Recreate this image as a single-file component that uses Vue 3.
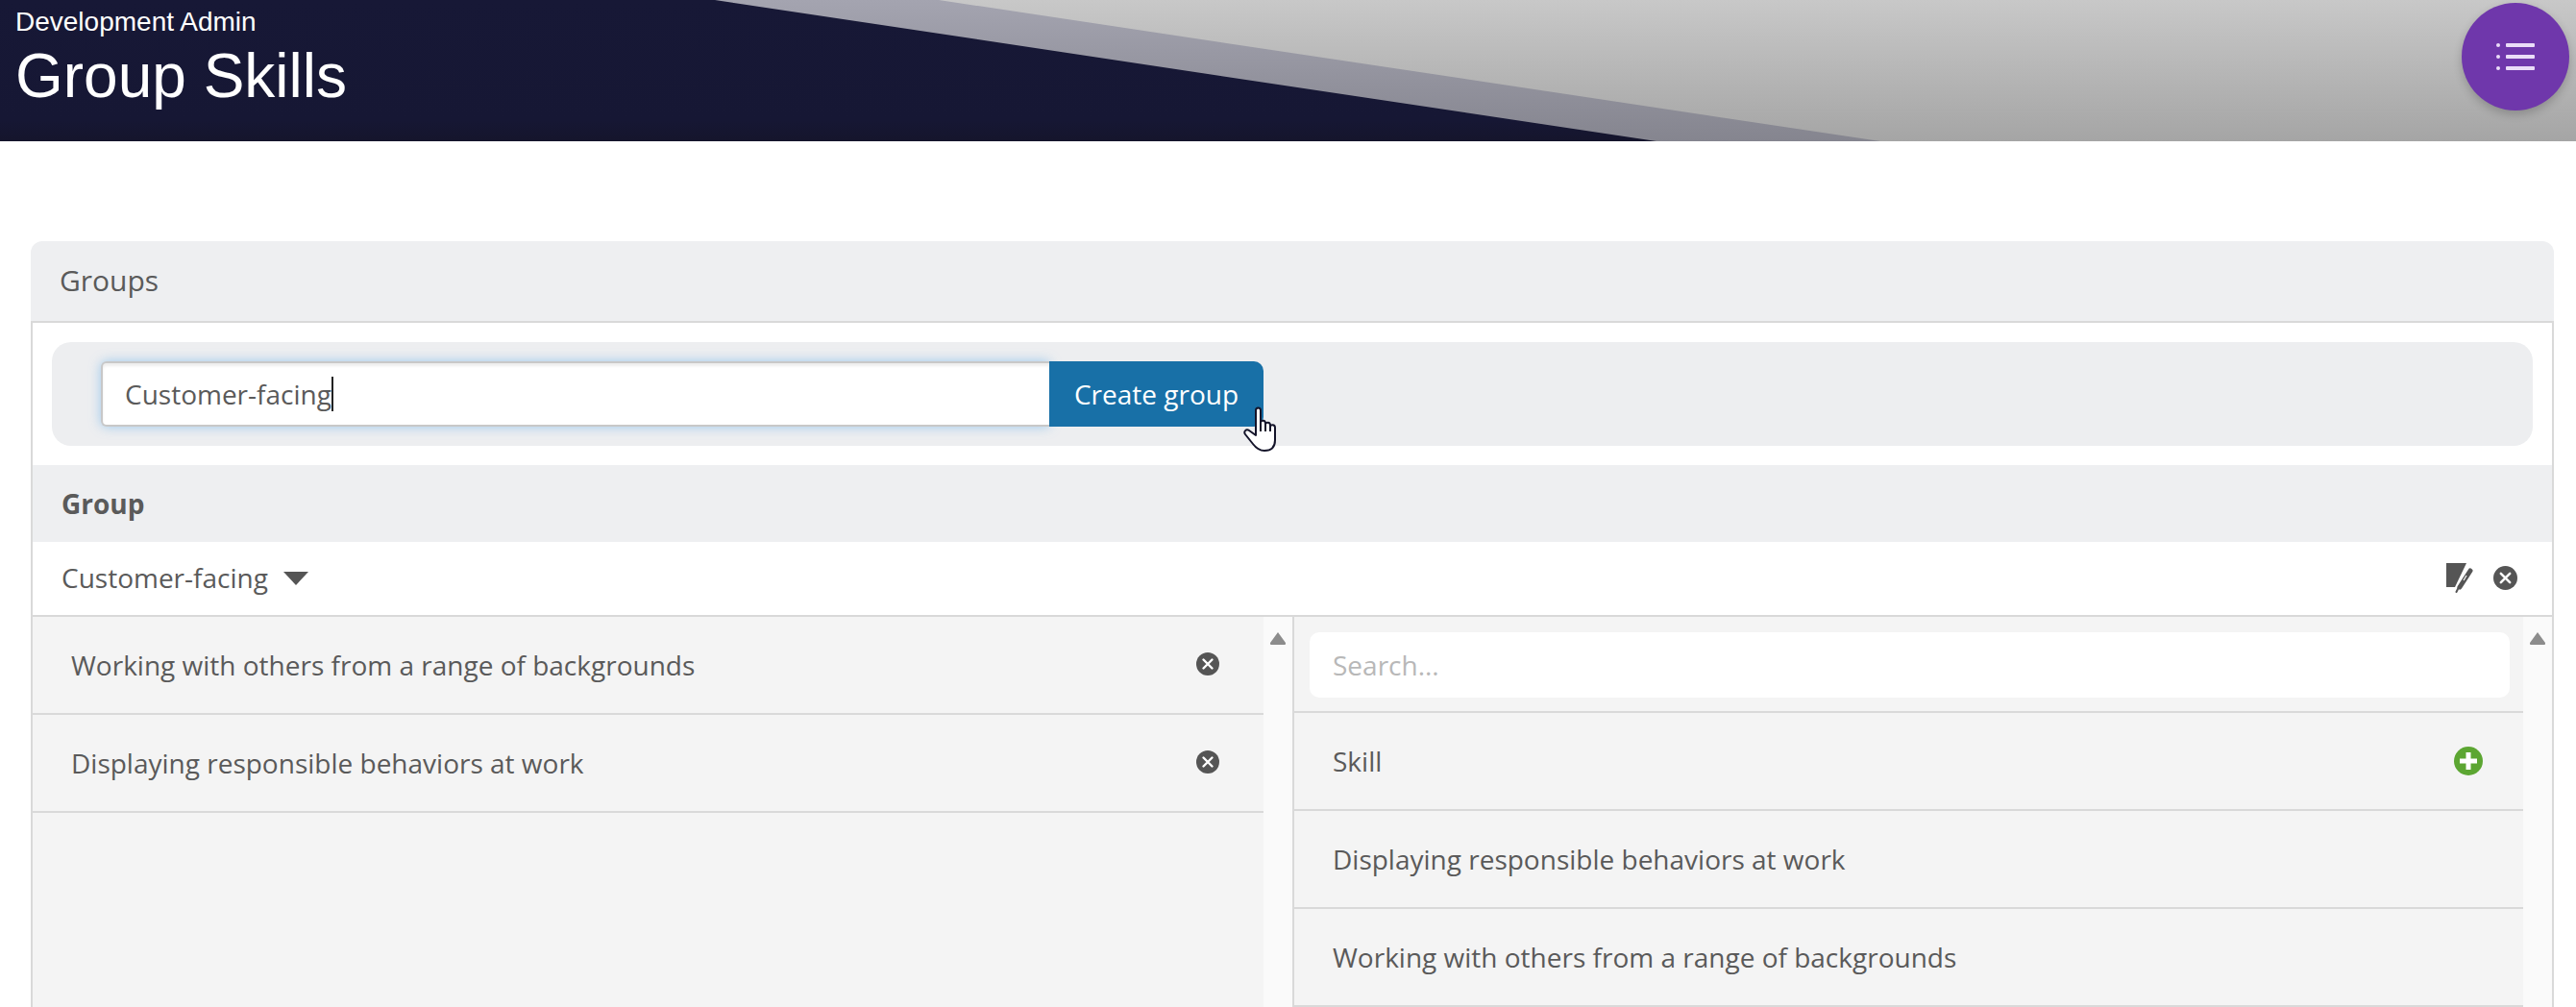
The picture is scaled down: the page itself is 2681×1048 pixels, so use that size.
<script setup>
const assigned = [
  'Working with others from a range of backgrounds',
  'Displaying responsible behaviors at work'
]
const available = [
  'Displaying responsible behaviors at work',
  'Working with others from a range of backgrounds'
]
</script>

<template>
  <div class="page">
    <header class="banner">
      <div class="wedge wedge-mid"></div>
      <div class="wedge wedge-light"></div>
      <div class="titles">
        <div class="crumb">Development Admin</div>
        <h1 class="title">Group Skills</h1>
      </div>
      <button class="fab" aria-label="Menu">
        <svg width="40" height="28" viewBox="0 0 40 28" fill="#eadcf8">
          <circle cx="2" cy="2" r="2" /><rect x="10" y="0" width="30" height="4" rx="1" />
          <circle cx="2" cy="14" r="2" /><rect x="10" y="12" width="30" height="4" rx="1" />
          <circle cx="2" cy="26" r="2" /><rect x="10" y="24" width="30" height="4" rx="1" />
        </svg>
      </button>
    </header>

    <main class="main">
      <section class="panel">
        <div class="panel-head">Groups</div>
        <div class="panel-body">
          <form class="create-band" @submit.prevent>
            <div class="fake-input"><span>Customer-facing</span><i class="caret"></i></div>
            <div class="create-wrap">
              <button class="create-btn">Create group</button>
              <svg class="hand" width="36" height="47" viewBox="0 0 36 47">
                <path d="M13 30 L13 4 C13 0.5 18 0.5 18 4 L18 17 C18 14 23 14 23 17.5 L23 19 C23 16 28 16 28 19.5 L28 21 C28 18.5 33 18.5 33 22 L33 35 C33 42 29 46 22 46 C16 46 13 43 10 39 L2 29 C0 26 3 23 6 25 Z" fill="#fff" stroke="#14142a" stroke-width="2" stroke-linejoin="round" />
                <path d="M18 17 V26 M23 19 V26 M28 21 V26" stroke="#14142a" stroke-width="2" fill="none" />
              </svg>
            </div>
          </form>

          <div class="group-head">Group</div>
          <div class="group-row">
            <div class="group-name">
              <span>Customer-facing</span>
              <svg width="26" height="14" viewBox="0 0 26 14"><path d="M0 0 H26 L13 14 Z" fill="#555" /></svg>
            </div>
            <div class="group-actions">
              <svg width="28" height="31" viewBox="0 0 28 31">
                <path d="M0 0 H21 L9 25 H0 Z" fill="#555" />
                <path d="M25 8 L14 25" stroke="#555" stroke-width="5" stroke-linecap="round" fill="none" />
                <path d="M13 25 L10.500 30" stroke="#555" stroke-width="2" stroke-linecap="round" fill="none" />
                <path d="M21 13 L18 18" stroke="#fff" stroke-width="1.200" fill="none" />
              </svg>
              <svg class="x-icon big" viewBox="0 0 24 24">
                <circle cx="12" cy="12" r="12" fill="#555" />
                <path d="M7.500 7.500 L16.500 16.500 M16.500 7.500 L7.500 16.500" stroke="#fff" stroke-width="2.400" stroke-linecap="round" />
              </svg>
            </div>
          </div>

          <div class="columns">
            <div class="col col-left">
              <div class="list">
                <div v-for="item in assigned" :key="item" class="item item-left">
                  <span>{{ item }}</span>
                  <svg class="x-icon" viewBox="0 0 24 24">
                    <circle cx="12" cy="12" r="12" fill="#555" />
                    <path d="M7.500 7.500 L16.500 16.500 M16.500 7.500 L7.500 16.500" stroke="#fff" stroke-width="2.400" stroke-linecap="round" />
                  </svg>
                </div>
              </div>
              <div class="scroll"><svg width="18" height="14" viewBox="0 0 18 14"><path d="M9 1 L17 12 Q17.500 14 16 14 H2 Q0.500 14 1 12 Z" fill="#8c8c8c" /></svg></div>
            </div>
            <div class="col col-right">
              <div class="list">
                <div class="search-row">
                  <input class="search" type="text" placeholder="Search..." />
                </div>
                <div class="item item-right">
                  <span>Skill</span>
                  <svg class="plus-icon" viewBox="0 0 30 30">
                    <circle cx="15" cy="15" r="15" fill="#5ca632" />
                    <path d="M15 6 V24 M6 15 H24" stroke="#fff" stroke-width="5" />
                  </svg>
                </div>
                <div v-for="item in available" :key="item" class="item item-right">
                  <span>{{ item }}</span>
                </div>
              </div>
              <div class="scroll"><svg width="18" height="14" viewBox="0 0 18 14"><path d="M9 1 L17 12 Q17.500 14 16 14 H2 Q0.500 14 1 12 Z" fill="#8c8c8c" /></svg></div>
            </div>
          </div>
        </div>
      </section>
    </main>
  </div>
</template>

<style>
html, body { margin: 0; height: 1048px; overflow: hidden; background: #fff; }
</style>

<style scoped>
* { box-sizing: border-box; }
.page {
  height: 1048px;
  overflow: hidden;
  font-family: "Open Sans", "Liberation Sans", sans-serif;
  color: #5a5a5a;
}
.banner {
  position: relative;
  height: 147px;
  background: linear-gradient(#171836, #161734 85%, #15152c);
  overflow: hidden;
}
.wedge { position: absolute; inset: 0; }
.wedge-mid {
  background: linear-gradient(#a4a4b0, #85858f);
  clip-path: polygon(744px 0, 100% 0, 100% 100%, 1724px 100%);
}
.wedge-light {
  background: linear-gradient(#c8c8c8, #a5a5a5);
  clip-path: polygon(977px 0, 100% 0, 100% 100%, 1957px 100%);
}
.titles {
  position: relative;
  padding: 6px 0 0 16px;
  font-family: "Liberation Sans", Arial, sans-serif;
  color: #fff;
}
.crumb { font-size: 28px; line-height: 34px; }
.title {
  margin: 3px 0 0 0;
  font-size: 64px;
  font-weight: 400;
  line-height: 72px;
}
.fab {
  position: absolute;
  left: 2562px;
  top: 3px;
  width: 112px;
  height: 112px;
  border: 0;
  border-radius: 50%;
  background: #6f37ab;
  box-shadow: 0 4px 10px rgba(0, 0, 0, .2);
  display: flex;
  align-items: center;
  justify-content: center;
  padding: 0;
}
.main { padding: 104px 23px 0 32px; }
.panel-head {
  height: 85px;
  padding: 0 0 2px 30px;
  display: flex;
  align-items: center;
  font-size: 30px;
  background: #eeeff1;
  border-bottom: 2px solid #d9d9d9;
  border-radius: 12px 12px 0 0;
}
.panel-body {
  border-left: 2px solid #d9d9d9;
  border-right: 2px solid #d9d9d9;
  padding-top: 20px;
}
.create-band {
  margin: 0 20px;
  height: 108px;
  padding: 20px 0 0 51px;
  background: #edeef0;
  border-radius: 20px;
  display: flex;
  align-items: flex-start;
}
.fake-input {
  width: 987px;
  height: 68px;
  padding-left: 23px;
  display: flex;
  align-items: center;
  font-size: 28px;
  background: #fff;
  border: 2px solid #c8c8c8;
  border-right: 0;
  border-radius: 6px 0 0 6px;
  box-shadow: 0 0 12px rgba(102, 175, 233, .6), inset 0 3px 3px rgba(0, 0, 0, .07);
}
.caret {
  width: 2px;
  height: 36px;
  background: #222;
}
.create-wrap { position: relative; }
.create-btn {
  display: block;
  width: 223px;
  height: 68px;
  padding: 0;
  border: 0;
  border-radius: 0 10px 10px 0;
  background: #1870a7;
  color: #fff;
  font-family: inherit;
  font-size: 28px;
}
.hand { position: absolute; left: 202px; top: 47px; }
.group-head {
  margin-top: 20px;
  height: 80px;
  padding-left: 30px;
  display: flex;
  align-items: center;
  font-size: 28px;
  font-weight: 700;
  background: #eeeff1;
}
.group-row {
  height: 78px;
  padding: 0 36px 2px 30px;
  display: flex;
  align-items: center;
  justify-content: space-between;
  font-size: 28px;
  border-bottom: 2px solid #d9d9d9;
}
.group-name { display: flex; align-items: center; gap: 16px; }
.group-name svg { margin-top: 2px; }
.group-actions { display: flex; align-items: center; gap: 21px; }
.x-icon { width: 24px; height: 24px; display: block; margin-bottom: 2px; }
.x-icon.big { width: 25px; height: 25px; margin-bottom: 0; }
.plus-icon { width: 30px; height: 30px; display: block; }
.columns { display: flex; height: 600px; }
.col { display: flex; }
.col-left { width: 1313px; border-right: 2px solid #d9d9d9; }
.col-right { flex: 1; }
.list { flex: 1; background: #f4f4f4; }
.scroll {
  width: 30px;
  background: #fafafa;
  padding-top: 15px;
  display: flex;
  justify-content: center;
  align-items: flex-start;
}
.item {
  height: 102px;
  display: flex;
  align-items: center;
  justify-content: space-between;
  font-size: 28px;
  border-bottom: 2px solid #d9d9d9;
}
.item-left { padding: 0 46px 0 40px; }
.item-right { padding: 0 42px 0 40px; }
.search-row {
  height: 100px;
  padding: 16px 14px 0 16px;
  border-bottom: 2px solid #d9d9d9;
}
.search {
  display: block;
  width: 100%;
  height: 68px;
  padding: 0 24px;
  border: 0;
  outline: 0;
  border-radius: 10px;
  background: #fff;
  font-family: inherit;
  font-size: 28px;
  color: #555;
}
.search::placeholder { color: #b8b8b8; opacity: 1; }
</style>
